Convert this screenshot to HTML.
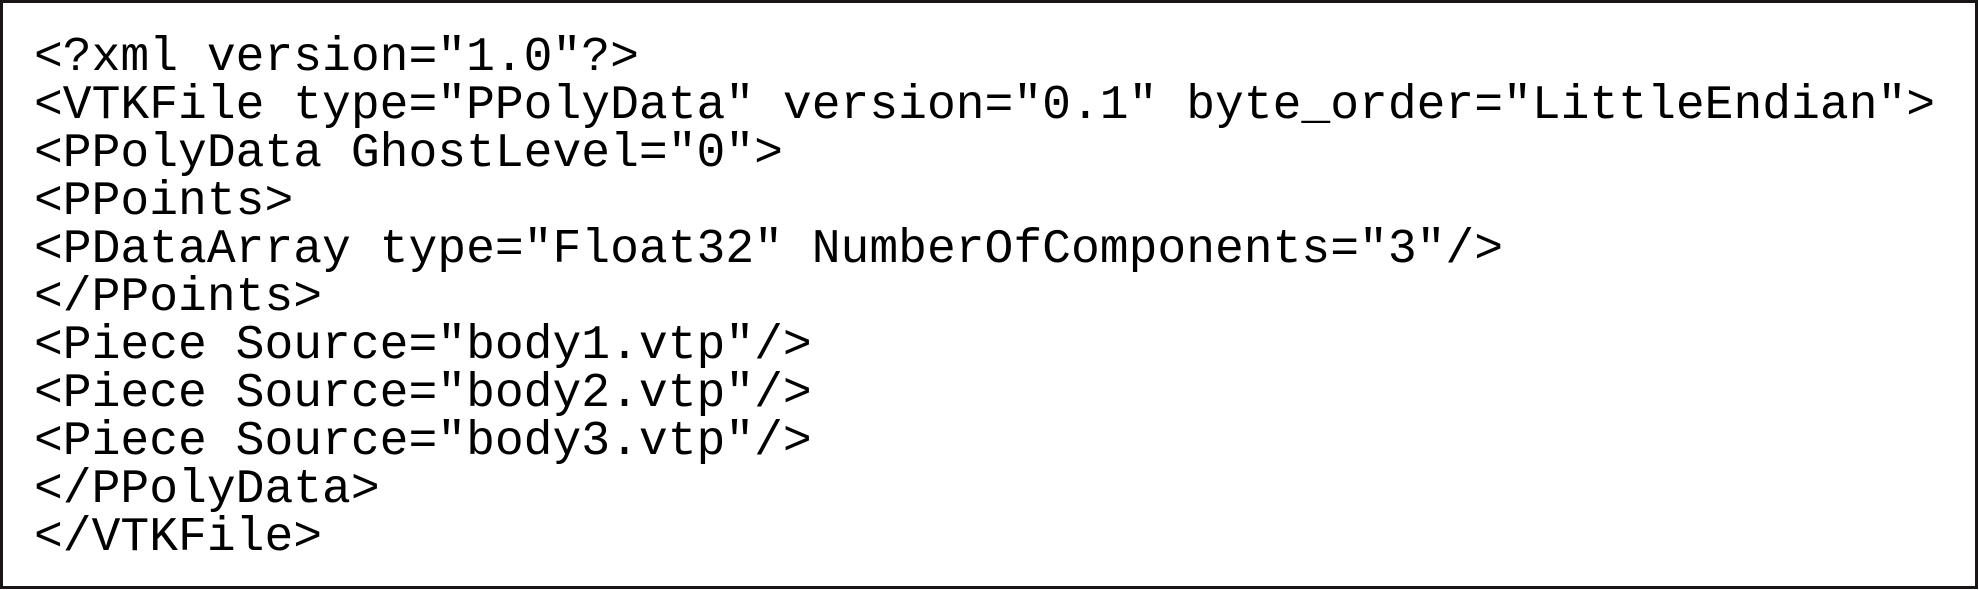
<!DOCTYPE html>
<html><head><meta charset="utf-8"><style>
html,body{margin:0;padding:0;background:#fff;}
body{width:1979px;height:590px;position:relative;overflow:hidden;}
.box{position:absolute;left:0;top:0;width:1972px;height:583px;border:3px solid #1a1414;background:#fff;}
pre{position:absolute;left:34px;top:34px;margin:0;font-family:"Liberation Mono",monospace;font-size:48px;line-height:48px;color:#000;}
</style></head><body>
<div class="box"></div>
<pre>&lt;?xml version="1.0"?&gt;
&lt;VTKFile type="PPolyData" version="0.1" byte_order="LittleEndian"&gt;
&lt;PPolyData GhostLevel="0"&gt;
&lt;PPoints&gt;
&lt;PDataArray type="Float32" NumberOfComponents="3"/&gt;
&lt;/PPoints&gt;
&lt;Piece Source="body1.vtp"/&gt;
&lt;Piece Source="body2.vtp"/&gt;
&lt;Piece Source="body3.vtp"/&gt;
&lt;/PPolyData&gt;
&lt;/VTKFile&gt;</pre>
</body></html>
